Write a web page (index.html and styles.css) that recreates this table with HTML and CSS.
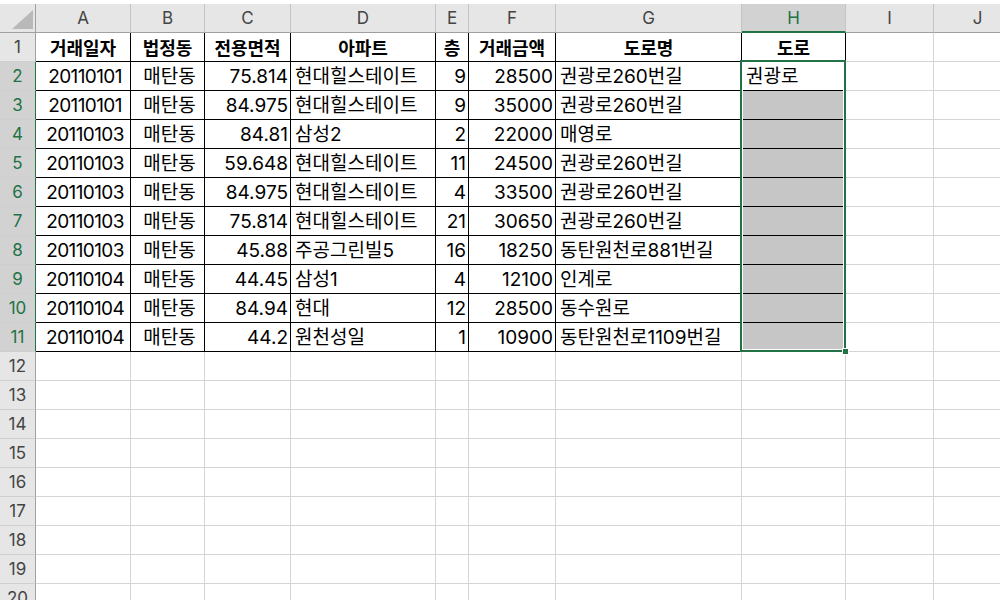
FILE: index.html
```html
<!DOCTYPE html>
<html lang="ko">
<head>
<meta charset="utf-8">
<title>Sheet</title>
<link rel="stylesheet" href="styles.css">
</head>
<body>
<div class="sheet">
  <div class="corner"><div class="tri"></div></div>
  <div class="ch">A</div><div class="ch">B</div><div class="ch">C</div><div class="ch">D</div><div class="ch">E</div><div class="ch">F</div><div class="ch">G</div><div class="ch selc">H</div><div class="ch">I</div><div class="ch">J</div>

  <div class="rh">1</div>
  <div class="c t hd">거래일자</div><div class="c t hd">법정동</div><div class="c t hd">전용면적</div><div class="c t hd">아파트</div><div class="c t hd">층</div><div class="c t hd">거래금액</div><div class="c t hd">도로명</div><div class="c t hd">도로</div><div class="c"></div><div class="c"></div>

  <div class="rh selr">2</div>
  <div class="c t ctr dt">20110101</div><div class="c t ctr">매탄동</div><div class="c t num">75.814</div><div class="c t txt">현대힐스테이트</div><div class="c t num">9</div><div class="c t num">28500</div><div class="c t txt">권광로260번길</div><div class="c t txt">권광로</div><div class="c"></div><div class="c"></div>

  <div class="rh selr">3</div>
  <div class="c t ctr dt">20110101</div><div class="c t ctr">매탄동</div><div class="c t num">84.975</div><div class="c t txt">현대힐스테이트</div><div class="c t num">9</div><div class="c t num">35000</div><div class="c t txt">권광로260번길</div><div class="c t g"></div><div class="c"></div><div class="c"></div>

  <div class="rh selr">4</div>
  <div class="c t ctr dt">20110103</div><div class="c t ctr">매탄동</div><div class="c t num">84.81</div><div class="c t txt">삼성2</div><div class="c t num">2</div><div class="c t num">22000</div><div class="c t txt">매영로</div><div class="c t g"></div><div class="c"></div><div class="c"></div>

  <div class="rh selr">5</div>
  <div class="c t ctr dt">20110103</div><div class="c t ctr">매탄동</div><div class="c t num">59.648</div><div class="c t txt">현대힐스테이트</div><div class="c t num">11</div><div class="c t num">24500</div><div class="c t txt">권광로260번길</div><div class="c t g"></div><div class="c"></div><div class="c"></div>

  <div class="rh selr">6</div>
  <div class="c t ctr dt">20110103</div><div class="c t ctr">매탄동</div><div class="c t num">84.975</div><div class="c t txt">현대힐스테이트</div><div class="c t num">4</div><div class="c t num">33500</div><div class="c t txt">권광로260번길</div><div class="c t g"></div><div class="c"></div><div class="c"></div>

  <div class="rh selr">7</div>
  <div class="c t ctr dt">20110103</div><div class="c t ctr">매탄동</div><div class="c t num">75.814</div><div class="c t txt">현대힐스테이트</div><div class="c t num">21</div><div class="c t num">30650</div><div class="c t txt">권광로260번길</div><div class="c t g"></div><div class="c"></div><div class="c"></div>

  <div class="rh selr">8</div>
  <div class="c t ctr dt">20110103</div><div class="c t ctr">매탄동</div><div class="c t num">45.88</div><div class="c t txt">주공그린빌5</div><div class="c t num">16</div><div class="c t num">18250</div><div class="c t txt">동탄원천로881번길</div><div class="c t g"></div><div class="c"></div><div class="c"></div>

  <div class="rh selr">9</div>
  <div class="c t ctr dt">20110104</div><div class="c t ctr">매탄동</div><div class="c t num">44.45</div><div class="c t txt">삼성1</div><div class="c t num">4</div><div class="c t num">12100</div><div class="c t txt">인계로</div><div class="c t g"></div><div class="c"></div><div class="c"></div>

  <div class="rh selr">10</div>
  <div class="c t ctr dt">20110104</div><div class="c t ctr">매탄동</div><div class="c t num">84.94</div><div class="c t txt">현대</div><div class="c t num">12</div><div class="c t num">28500</div><div class="c t txt">동수원로</div><div class="c t g"></div><div class="c"></div><div class="c"></div>

  <div class="rh selr">11</div>
  <div class="c t ctr dt">20110104</div><div class="c t ctr">매탄동</div><div class="c t num">44.2</div><div class="c t txt">원천성일</div><div class="c t num">1</div><div class="c t num">10900</div><div class="c t txt">동탄원천로1109번길</div><div class="c t g"></div><div class="c"></div><div class="c"></div>

  <div class="rh">12</div><div class="c"></div><div class="c"></div><div class="c"></div><div class="c"></div><div class="c"></div><div class="c"></div><div class="c"></div><div class="c"></div><div class="c"></div><div class="c"></div>
  <div class="rh">13</div><div class="c"></div><div class="c"></div><div class="c"></div><div class="c"></div><div class="c"></div><div class="c"></div><div class="c"></div><div class="c"></div><div class="c"></div><div class="c"></div>
  <div class="rh">14</div><div class="c"></div><div class="c"></div><div class="c"></div><div class="c"></div><div class="c"></div><div class="c"></div><div class="c"></div><div class="c"></div><div class="c"></div><div class="c"></div>
  <div class="rh">15</div><div class="c"></div><div class="c"></div><div class="c"></div><div class="c"></div><div class="c"></div><div class="c"></div><div class="c"></div><div class="c"></div><div class="c"></div><div class="c"></div>
  <div class="rh">16</div><div class="c"></div><div class="c"></div><div class="c"></div><div class="c"></div><div class="c"></div><div class="c"></div><div class="c"></div><div class="c"></div><div class="c"></div><div class="c"></div>
  <div class="rh">17</div><div class="c"></div><div class="c"></div><div class="c"></div><div class="c"></div><div class="c"></div><div class="c"></div><div class="c"></div><div class="c"></div><div class="c"></div><div class="c"></div>
  <div class="rh">18</div><div class="c"></div><div class="c"></div><div class="c"></div><div class="c"></div><div class="c"></div><div class="c"></div><div class="c"></div><div class="c"></div><div class="c"></div><div class="c"></div>
  <div class="rh">19</div><div class="c"></div><div class="c"></div><div class="c"></div><div class="c"></div><div class="c"></div><div class="c"></div><div class="c"></div><div class="c"></div><div class="c"></div><div class="c"></div>
  <div class="rh">20</div><div class="c"></div><div class="c"></div><div class="c"></div><div class="c"></div><div class="c"></div><div class="c"></div><div class="c"></div><div class="c"></div><div class="c"></div><div class="c"></div>

  <div class="selection"><div class="handle"></div></div>
</div>
</body>
</html>
```

FILE: styles.css
```css
html, body {
  margin: 0;
  padding: 0;
  background: #ffffff;
  overflow: hidden;
}

body {
  width: 1000px;
  height: 600px;
  font-family: "Inter", "Noto Sans CJK KR", sans-serif;
  font-size: 18px;
  color: #000;
}

.sheet {
  position: relative;
  margin-top: 4px;
  display: grid;
  grid-template-columns: 36px 95px 74px 86px 145px 33px 87px 186px 104px 88px 88px;
  grid-auto-rows: 29px;
  width: 1022px;
}

.sheet > div {
  box-sizing: border-box;
  display: flex;
  align-items: center;
  line-height: 1;
  white-space: nowrap;
  overflow: hidden;
}

.corner {
  background: #e6e6e6;
  border-right: 1px solid #a0a0a0;
  border-bottom: 1px solid #a0a0a0;
  justify-content: flex-end;
  align-items: flex-end !important;
  padding: 0 2px 3px 0;
}

.tri {
  width: 21px;
  height: 19px;
  background: #b9b9b9;
  clip-path: polygon(100% 0, 100% 100%, 0 100%);
}

.ch {
  background: #e6e6e6;
  color: #444;
  font-size: 17px;
  justify-content: center;
  border-right: 1px solid #c4c4c4;
  border-bottom: 1px solid #a0a0a0;
}

.ch.selc {
  background: #d2d2d2;
  color: #217346;
  border-bottom: 2px solid #217346;
  padding-top: 1px;
}

.rh {
  background: #e6e6e6;
  color: #444;
  font-size: 17px;
  justify-content: center;
  border-right: 1px solid #a0a0a0;
  border-bottom: 1px solid #cfcfcf;
}

.rh.selr {
  background: #d2d2d2;
  color: #217346;
  border-right: 1px solid #217346;
}

.c {
  font-size: 19px;
  border-right: 1px solid #d4d4d4;
  border-bottom: 1px solid #d4d4d4;
}

.c.t {
  border-right-color: #000;
  border-bottom-color: #000;
}

.hd {
  font-family: "Noto Sans CJK KR", sans-serif;
  font-size: 18px;
  font-weight: 700;
  justify-content: center;
}

.ctr {
  justify-content: center;
  padding-left: 4px;
}

.dt {
  letter-spacing: -0.6px;
}

.num {
  justify-content: flex-end;
  padding-right: 2px;
}

.txt {
  justify-content: flex-start;
  padding-left: 4px;
}

.g {
  background: #c6c6c6;
}

.sheet > .selection {
  position: absolute;
  grid-column: 9 / 10;
  grid-row: 3 / 13;
  top: -2px;
  left: -2px;
  right: 0;
  bottom: 0;
  border: 2px solid #217346;
  box-shadow: inset 0 0 0 1px #ffffff;
  overflow: visible;
  pointer-events: none;
}

.handle {
  position: absolute;
  right: -4px;
  bottom: -4px;
  width: 5px;
  height: 5px;
  background: #217346;
  outline: 1px solid #ffffff;
}
```
